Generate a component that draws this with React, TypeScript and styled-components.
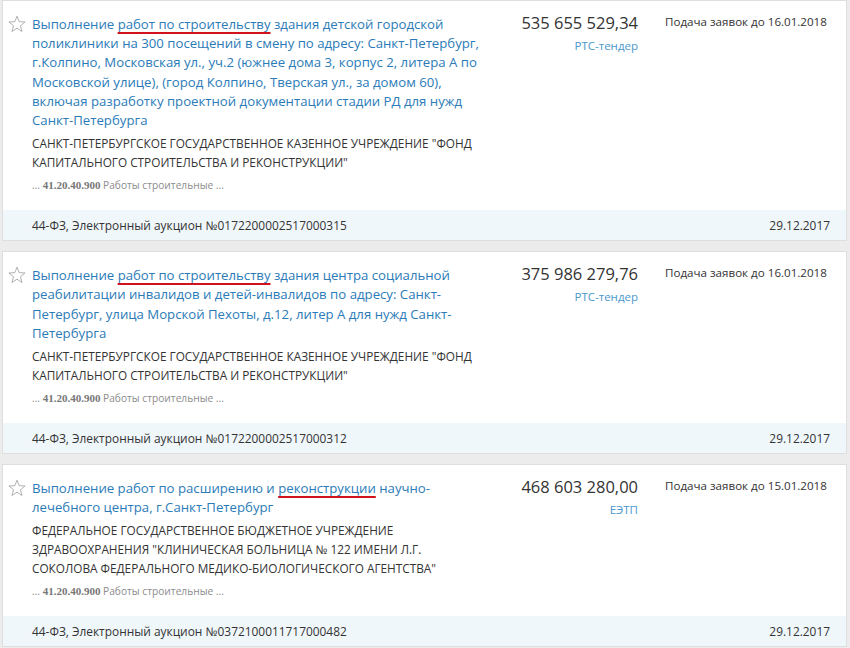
import React from "react";
import styled, { createGlobalStyle } from "styled-components";

const GlobalStyle = createGlobalStyle`
  html, body { margin: 0; padding: 0; }
  body {
    background: #ececec;
    font-family: "Open Sans", "Noto Sans", "Liberation Sans", sans-serif;
    color: #333;
  }
`;

const List = styled.div`
  display: flex;
  flex-direction: column;
  gap: 10px;
  padding: 0 3px 0 2px;
`;

const Card = styled.article`
  background: #fff;
  border: 1px solid #dedede;
`;

const Body = styled.div`
  display: grid;
  grid-template-columns: 24px 453px 153px 1fr;
  padding: 14px 16px 17px 5px;
`;

const StarBox = styled.div`
  padding-top: 0;
`;

const Main = styled.div`
  display: flex;
  flex-direction: column;
`;

const Title = styled.a`
  font-size: 13.2px;
  line-height: 19.2px;
  color: #2b7bb8;
  text-decoration: none;
`;

const Hl = styled.span`
  text-decoration: underline;
  text-decoration-color: #d3131b;
  text-decoration-thickness: 2px;
  text-underline-offset: 3px;
`;

const Org = styled.div`
  margin-top: 4px;
  font-size: 11.8px;
  line-height: 19px;
  color: #333;
`;

const Okpd = styled.div`
  margin-top: 5px;
  font-size: 10.2px;
  line-height: 16px;
  color: #8c8c8c;
  b {
    font-family: "Liberation Serif", "DejaVu Serif", serif;
    font-size: 11px;
    color: #777;
  }
`;

const PriceCol = styled.div`
  display: flex;
  flex-direction: column;
  align-items: flex-end;
  margin-top: -1px;
`;

const Price = styled.div`
  font-size: 16.5px;
  line-height: 18px;
  color: #333;
`;

const Platform = styled.a`
  margin-top: 6px;
  font-size: 11.5px;
  line-height: 16px;
  color: #4a98cc;
  text-decoration: none;
`;

const Deadline = styled.div`
  padding-left: 27px;
  margin-top: -1px;
  font-size: 11.6px;
  line-height: 16px;
  color: #333;
  white-space: nowrap;
`;

const Footer = styled.div`
  display: flex;
  justify-content: space-between;
  align-items: center;
  height: 30px;
  padding: 0 16px 0 29px;
  background: #f0f7fb;
  font-size: 11.9px;
  color: #333;
`;

const Star = () => (
  <svg width="18" height="18" viewBox="0 0 24 24" fill="none" stroke="#a8a8a8" strokeWidth="1.2" strokeLinejoin="miter">
    <polygon points="12,1.5 14.9,8.9 22.8,9.3 16.6,14.3 18.7,22 12,17.6 5.3,22 7.4,14.3 1.2,9.3 9.1,8.9" />
  </svg>
);

type Item = {
  title: React.ReactNode;
  org: string;
  price: string;
  platform: string;
  deadline: string;
  number: string;
  date: string;
};

const items: Item[] = [
  {
    title: (
      <>
        Выполнение <Hl>работ по строительству</Hl> здания детской городской поликлиники на 300 посещений в смену по адресу: Санкт-Петербург, г.Колпино, Московская ул., уч.2 (южнее дома 3, корпус 2, литера А по Московской улице), (город Колпино, Тверская ул., за домом 60), включая разработку проектной документации стадии РД для нужд Санкт-Петербурга
      </>
    ),
    org: 'САНКТ-ПЕТЕРБУРГСКОЕ ГОСУДАРСТВЕННОЕ КАЗЕННОЕ УЧРЕЖДЕНИЕ "ФОНД КАПИТАЛЬНОГО СТРОИТЕЛЬСТВА И РЕКОНСТРУКЦИИ"',
    price: "535 655 529,34",
    platform: "РТС-тендер",
    deadline: "Подача заявок до 16.01.2018",
    number: "44-ФЗ, Электронный аукцион №0172200002517000315",
    date: "29.12.2017",
  },
  {
    title: (
      <>
        Выполнение <Hl>работ по строительству</Hl> здания центра социальной реабилитации инвалидов и детей-инвалидов по адресу: Санкт-Петербург, улица Морской Пехоты, д.12, литер А для нужд Санкт-Петербурга
      </>
    ),
    org: 'САНКТ-ПЕТЕРБУРГСКОЕ ГОСУДАРСТВЕННОЕ КАЗЕННОЕ УЧРЕЖДЕНИЕ "ФОНД КАПИТАЛЬНОГО СТРОИТЕЛЬСТВА И РЕКОНСТРУКЦИИ"',
    price: "375 986 279,76",
    platform: "РТС-тендер",
    deadline: "Подача заявок до 16.01.2018",
    number: "44-ФЗ, Электронный аукцион №0172200002517000312",
    date: "29.12.2017",
  },
  {
    title: (
      <>
        Выполнение работ по расширению и <Hl>реконструкции</Hl> научно-лечебного центра, г.Санкт-Петербург
      </>
    ),
    org: 'ФЕДЕРАЛЬНОЕ ГОСУДАРСТВЕННОЕ БЮДЖЕТНОЕ УЧРЕЖДЕНИЕ ЗДРАВООХРАНЕНИЯ "КЛИНИЧЕСКАЯ БОЛЬНИЦА № 122 ИМЕНИ Л.Г. СОКОЛОВА ФЕДЕРАЛЬНОГО МЕДИКО-БИОЛОГИЧЕСКОГО АГЕНТСТВА"',
    price: "468 603 280,00",
    platform: "ЕЭТП",
    deadline: "Подача заявок до 15.01.2018",
    number: "44-ФЗ, Электронный аукцион №0372100011717000482",
    date: "29.12.2017",
  },
];

export default function App() {
  return (
    <>
      <GlobalStyle />
      <List>
        {items.map((it, i) => (
          <Card key={i}>
            <Body>
              <StarBox>
                <Star />
              </StarBox>
              <Main>
                <Title href="#">{it.title}</Title>
                <Org>{it.org}</Org>
                <Okpd>
                  ... <b>41.20.40.900</b> Работы строительные ...
                </Okpd>
              </Main>
              <PriceCol>
                <Price>{it.price}</Price>
                <Platform href="#">{it.platform}</Platform>
              </PriceCol>
              <Deadline>{it.deadline}</Deadline>
            </Body>
            <Footer>
              <span>{it.number}</span>
              <span>{it.date}</span>
            </Footer>
          </Card>
        ))}
      </List>
    </>
  );
}
